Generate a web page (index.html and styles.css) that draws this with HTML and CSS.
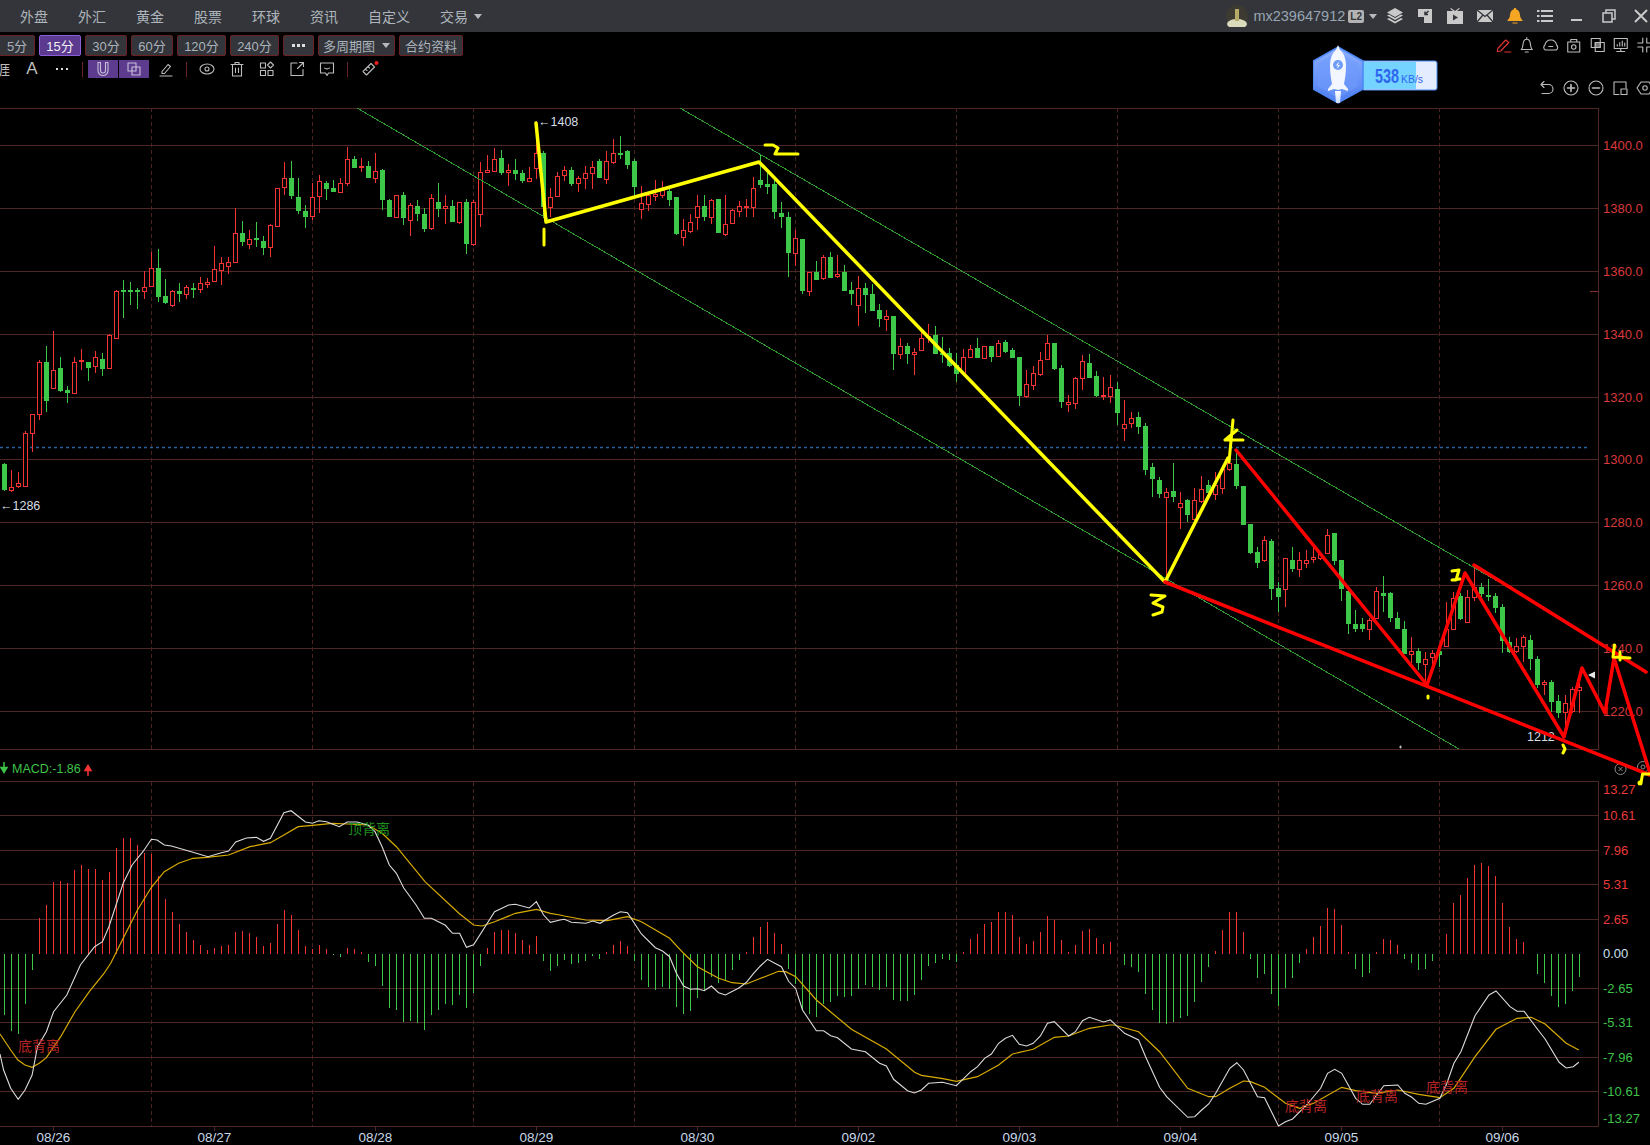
FILE: index.html
```html
<!DOCTYPE html>
<html lang="zh">
<head>
<meta charset="utf-8">
<title>MACD chart</title>
<link rel="stylesheet" href="styles.css">
</head>
<body>
<header class="topbar">
  <nav class="menu">
    <span>外盘</span><span>外汇</span><span>黄金</span><span>股票</span><span>环球</span><span>资讯</span><span>自定义</span><span class="trade">交易<i class="caret"></i></span>
  </nav>
  <div class="account">
    <svg class="avatar" viewBox="0 0 22 22"><circle cx="11" cy="11" r="11" fill="#3d3a31"/><ellipse cx="11" cy="19" rx="10" ry="5" fill="#dcdabc"/><rect x="9" y="4" width="4" height="12" fill="#b7aa66"/></svg>
    <span class="user">mx239647912</span><span class="badge">L2</span><i class="caret"></i>
  </div>
  <div class="winicons">
    <svg class="wi" viewBox="0 0 18 18"><path d="M9 1l8 4.500-8 4.500-8-4.500z"/><path d="M1 8.500l2-1 6 3.400 6-3.400 2 1-8 4.500z"/><path d="M1 12l2-1 6 3.400 6-3.400 2 1-8 4.500z"/></svg>
    <svg class="wi" viewBox="0 0 18 18"><path d="M2 2h14v14H8v-6H2z"/><path d="M12.500 4L9 7.500 M9 4.500V7.500h3" fill="none" stroke="#33353a" stroke-width="1.500"/></svg>
    <svg class="wi" viewBox="0 0 18 18"><path d="M5 1l4 3 4-3 .8.800L11 4h6v13H1V4h6L4.200 1.800z"/><path d="M7 7.500l5 3-5 3z" fill="#33353a"/></svg>
    <svg class="wi" viewBox="0 0 18 18"><path d="M1 3h16v12H1z"/><path d="M1 3l8 6.500L17 3 M1 15l6-7 M17 15l-6-7" fill="none" stroke="#33353a" stroke-width="1.300"/></svg>
    <svg class="wi bell" viewBox="0 0 18 18"><path d="M9 1c.8 0 1.200.500 1.200 1.200C13 3 13.800 5.500 14 8c.2 2.500 1 4 2.500 5v1h-15v-1C3 12 3.800 10.500 4 8c.2-2.500 1-5 3.800-5.800C7.800 1.500 8.200 1 9 1zM6.500 15.500h5V16.500h-5z"/></svg>
    <svg class="wi" viewBox="0 0 18 18"><path d="M1 3h2.500v2H1zM5 3h12v2H5zM1 8h2.500v2H1zM5 8h12v2H5zM1 13h2.500v2H1zM5 13h12v2H5z"/></svg>
    <svg class="wi gap" viewBox="0 0 18 18"><path d="M3 12h11v2H3z"/></svg>
    <svg class="wi gap" viewBox="0 0 18 18"><path d="M3 6h9v9H3z M6 6V3h9v9h-3" fill="none" stroke="#c9c9c9" stroke-width="1.500"/></svg>
    <svg class="wi gap" viewBox="0 0 18 18"><path d="M3 3l12 12M15 3L3 15" fill="none" stroke="#c9c9c9" stroke-width="2"/></svg>
  </div>
</header>

<section class="row1">
  <button class="tf w36">5分</button>
  <button class="tf w42 on">15分</button>
  <button class="tf w42">30分</button>
  <button class="tf w42">60分</button>
  <button class="tf w49">120分</button>
  <button class="tf w49">240分</button>
  <button class="tf more"><i></i><i></i><i></i></button>
  <button class="tf w77">多周期图<i class="caret small"></i></button>
  <button class="tf w64">合约资料</button>
  <div class="righttools">
    <svg class="ic red" viewBox="0 0 18 18"><path d="M3 12.500L11 4l3 2.500-8 8.500-3.500.5zM10 16h6"/></svg>
    <svg class="ic" viewBox="0 0 18 18"><path d="M3.500 13.500c1.500-1 1.500-3 1.800-5.500C5.700 5 7.500 3.200 9 3.200S12.300 5 12.700 8c.3 2.500.3 4.500 1.800 5.500zM7.500 16h3M9 1.500v1.700"/></svg>
    <svg class="ic" viewBox="0 0 18 18"><path d="M3.500 14a3 3 0 0 1-.3-5A5.500 5.500 0 0 1 9 4a5.500 5.500 0 0 1 5.800 5 3 3 0 0 1-.3 5zM7 10.500h4"/></svg>
    <svg class="ic" viewBox="0 0 18 18"><path d="M3 6h12v10H3zM6 6V3.500h6V6"/><circle cx="9" cy="11" r="2.200"/></svg>
    <svg class="ic" viewBox="0 0 18 18"><path d="M2.500 2.500h9v9h-9zM6.500 6.500h9v9h-9z"/><path d="M6.500 6.500h5v5h-5z" fill="#777"/></svg>
    <svg class="ic" viewBox="0 0 18 18"><path d="M2.500 2.500h13v10h-13zM5 15.500h8M9 12.500v3M5.500 10V8.500M8 10V6.500M10.500 10V5M13 10V7"/></svg>
    <svg class="ic" viewBox="0 0 18 18"><path d="M7 2v5H2M11 2v5h5M7 16v-5H2M11 16v-5h5"/></svg>
  </div>
</section>

<section class="row2">
  <span class="clip">涯</span>
  <span class="cell cell-a">A</span>
  <span class="cell"><svg class="ic" viewBox="0 0 18 18"><path class="dots" d="M3 9h2M8 9h2M13 9h2"/></svg></span>
  <i class="sep"></i>
  <span class="cell pur"><svg class="ic" viewBox="0 0 18 18"><path d="M4 2.500v8a5 5 0 0 0 10 0v-8h-2.500v8a2.500 2.500 0 0 1-5 0v-8z"/></svg></span>
  <span class="cell pur next"><svg class="ic" viewBox="0 0 18 18"><path d="M3 3h8v8H3zM7 7h8v8H7z"/></svg></span>
  <span class="cell pen"><svg class="ic" viewBox="0 0 18 18"><path d="M5 11.500L11 4.500l2.500 2-6 7H5zM3 16h12"/></svg></span>
  <i class="sep"></i>
  <span class="cell"><svg class="ic" viewBox="0 0 18 18"><ellipse cx="9" cy="9" rx="7" ry="5"/><circle cx="9" cy="9" r="2"/></svg></span>
  <span class="cell"><svg class="ic" viewBox="0 0 18 18"><path d="M3 4.500h12M7 4.500V2.500h4v2M4.500 4.500V16h9V4.500M7.500 8v4.500M10.500 8v4.500"/></svg></span>
  <span class="cell"><svg class="ic" viewBox="0 0 18 18"><path d="M2.500 3h5v5h-5zM2.500 10.500h5v5h-5zM10 10.500h5v5h-5zM12.500 2l3 3-3 3-3-3z"/></svg></span>
  <span class="cell"><svg class="ic" viewBox="0 0 18 18"><path d="M9 3H3v12.500h12V9.500M9.500 8.500L15.500 2.500M11.500 2.500h4v4"/></svg></span>
  <span class="cell"><svg class="ic" viewBox="0 0 18 18"><path d="M2.500 3h13v10h-5L9 15.500 7.500 13h-5zM6.500 8c1 1.200 4 1.200 5 0"/></svg></span>
  <i class="sep"></i>
  <span class="cell ruler"><svg class="ic" viewBox="0 0 18 18"><path d="M2 11.500L10 3.500l3.500 3.500L5.500 15zM4.500 9l1.500 1.500M7 6.500l1.500 1.500"/><circle class="dot" cx="15.500" cy="3" r="2"/></svg></span>
</section>

<section class="row3">
  <svg class="ic" viewBox="0 0 18 18"><path d="M4 5.500h7.500a4.500 4.500 0 0 1 0 9H5M7 2.500L4 5.500l3 3"/></svg>
  <svg class="ic" viewBox="0 0 18 18"><circle cx="9" cy="9" r="7"/><path d="M5.500 9h7M9 5.500v7" class="thick"/></svg>
  <svg class="ic" viewBox="0 0 18 18"><circle cx="9" cy="9" r="7"/><path d="M5.500 9h7" class="thick"/></svg>
  <svg class="ic" viewBox="0 0 18 18"><path d="M8 15.500H3V3h12v6"/><path d="M10 10h6v5.500h-6z"/></svg>
  <svg class="ic" viewBox="0 0 18 18"><path d="M5 3h8l4 6-4 6H5L1 9z"/><circle cx="9" cy="9" r="2.200"/></svg>
</section>

<aside class="speed">
  <svg viewBox="0 0 125 60" width="125" height="60">
    <defs>
      <linearGradient id="hexfill" x1="0" y1="0" x2="0" y2="1"><stop offset="0" stop-color="#8db0ff"/><stop offset="1" stop-color="#4f7ef2"/></linearGradient>
      <linearGradient id="flame" x1="0" y1="0" x2="0" y2="1"><stop offset="0" stop-color="#fff"/><stop offset="1" stop-color="#c9dcff"/></linearGradient>
    </defs>
    <rect x="49" y="17" width="75" height="29" rx="2" fill="#e4ecff" stroke="#4f8ef7"/>
    <path d="M50 18h53v27H50z" fill="#74d3ff"/>
    <text class="sp-num" x="62" y="39" textLength="24" lengthAdjust="spacingAndGlyphs">538</text>
    <text class="sp-unit" x="88" y="39" textLength="22" lengthAdjust="spacingAndGlyphs">KB/s</text>
    <path d="M25 3l25 14v28L25 59 0 45V17z" fill="url(#hexfill)" stroke="#4d86f5" stroke-width="1.500"/>
    <path d="M25 8l20 11.500v23L25 54 5 42.500v-23z" fill="#6f9bfb" opacity=".6"/>
    <path d="M25 1l2 5c4 3 6 9 6 16 0 7-1 13-2 18l4 5v2l-6-2-4 1-4-1-6 2v-2l4-5c-1-5-2-11-2-18 0-7 2-13 6-16z" fill="#f4f6ff"/>
    <path d="M22 47h6l-1 12h-4z" fill="url(#flame)"/>
    <circle cx="25" cy="21" r="5" fill="#6f9df6"/>
    <path d="M26 17.500l-3 4h2l-1 3.500 3-4h-2z" fill="#fff"/>
  </svg>
</aside>

<svg class="chart" viewBox="0 108 1650 1037" xmlns="http://www.w3.org/2000/svg">
  <g id="grid"></g>
  <line class="blue" x1="0" y1="447.5" x2="1588" y2="447.5"/>
  <g id="candles"></g>
  <line class="chan" x1="357" y1="108" x2="1459" y2="749"/>
  <line class="chan" x1="680" y1="108" x2="1530" y2="600"/>
  <g id="macd"></g>
  <polyline id="dea" class="dea"/>
  <polyline id="dif" class="dif"/>

  <g class="ax price">
    <text x="1603" y="145">1400.0</text><text x="1603" y="208">1380.0</text><text x="1603" y="271">1360.0</text><text x="1603" y="334">1340.0</text><text x="1603" y="397">1320.0</text><text x="1603" y="459">1300.0</text><text x="1603" y="522">1280.0</text><text x="1603" y="585">1260.0</text><text x="1603" y="648">1240.0</text><text x="1603" y="711">1220.0</text>
  </g>
  <line class="tick" x1="1590" y1="291.500" x2="1598" y2="291.500"/>
  <g class="ax price bright">
    <text x="1603" y="789">13.27</text><text x="1603" y="815">10.61</text><text x="1603" y="850">7.96</text><text x="1603" y="884">5.31</text><text x="1603" y="919">2.65</text>
  </g>
  <text class="ax zero" x="1603" y="953">0.00</text>
  <g class="ax down">
    <text x="1603" y="988">-2.65</text><text x="1603" y="1022">-5.31</text><text x="1603" y="1057">-7.96</text><text x="1603" y="1091">-10.61</text><text x="1603" y="1118">-13.27</text>
  </g>
  <g class="ax date">
    <text x="53.500" y="1137.500">08/26</text><text x="214.500" y="1137.500">08/27</text><text x="375.500" y="1137.500">08/28</text><text x="536.500" y="1137.500">08/29</text><text x="697.500" y="1137.500">08/30</text><text x="858.500" y="1137.500">09/02</text><text x="1019.500" y="1137.500">09/03</text><text x="1180.500" y="1137.500">09/04</text><text x="1341.500" y="1137.500">09/05</text><text x="1502.500" y="1137.500">09/06</text>
  </g>

  <path class="arr-g" d="M4 762v8M1 767.500l3 5 3-5z"/>
  <text class="macdt" x="12" y="769">MACD:-1.86</text>
  <path class="arr-r" d="M88 776v-8M85 770.500l3-5 3 5z"/>
  <text class="div-r" x="18" y="1046">底背离</text>
  <text class="div-g" x="348" y="829">顶背离</text>
  <text class="div-r" x="1285" y="1106">底背离</text>
  <text class="div-r" x="1356" y="1096">底背离</text>
  <text class="div-r" x="1426" y="1087">底背离</text>

  <text class="lab" x="538" y="122">←1408</text>
  <text class="lab" x="0" y="506">←1286</text>
  <text class="lab" x="1527" y="737">1212</text>
  <path class="wtri" d="M1588 675l7-3.500v7z"/>
  <path class="mini" d="M1399 747h3M1400.500 745.500v3"/>

  <g class="round">
    <circle cx="1620.500" cy="769" r="5.500"/><path d="M1618.500 767l4 4m0-4l-4 4"/>
    <circle cx="1643" cy="767" r="5.500"/><circle cx="1643" cy="767" r="2"/>
  </g>

  <polyline class="yl" points="536,123 546,222 759,162 1165,582 1228,458"/>
  <path class="ym" d="M544 229v16M765 145h8l5 3-3 6h23M1151 595l14 1-12 7 10 4-1 5-9 3M1233 420l-4 42M1237 430l-12 10h18"/>
  <path class="ym" d="M1452 571l7-1-3 10h-4l8-1M1428 696v2M1563 745l2 4-2 4"/>

  <polyline class="rl" points="1236,450 1427,685 1465,573 1564,737 1582,668 1605,713 1614,658 1650,773"/>
  <line class="rl" x1="1165" y1="582" x2="1650" y2="775"/>
  <line class="rl" x1="1474" y1="565" x2="1646" y2="672"/>
  <path class="ym" d="M1614.500 645l-1.500 12 17 1M1620 652v8M1642.600 774h8M1642.600 774l-1.500 8"/>
  <circle class="ydot" cx="1640" cy="783" r="2.500"/>
</svg>
<script src="chart.js"></script>
</body>
</html>
```
FILE: styles.css
```css
* { box-sizing: border-box; }
html, body { margin: 0; padding: 0; }
body {
  width: 1650px; height: 1145px; overflow: hidden; background: #000; position: relative;
  font-family: "Liberation Sans", "Noto Sans CJK SC", sans-serif; color: #a9b2bb;
}
.caret { display: inline-block; width: 0; height: 0; border: 4.500px solid transparent; border-top: 5px solid #b5b9be; border-bottom: 0; }
.topbar { height: 32px; background: #33353a; display: flex; align-items: center; }
.menu { display: flex; gap: 30px; padding-left: 20px; font-size: 14px; color: #aeb5bc; }
.trade { display: flex; align-items: center; gap: 6px; }
.account { margin-left: auto; display: flex; align-items: center; }
.avatar { width: 22px; height: 22px; }
.user { font-size: 14.500px; color: #97a6b3; margin-left: 5px; }
.badge { font: bold 10px "Liberation Sans", sans-serif; background: #b3b3b3; color: #33353a; border-radius: 2px; padding: 1px 2px; margin: 0 5px 0 3px; }
.winicons { display: flex; align-items: center; gap: 12px; margin-left: 9px; }
.wi { width: 18px; height: 18px; fill: #c9c9c9; }
.wi.bell { fill: #f5a623; }
.wi.gap { margin-left: 2px; }
.row1 { height: 25px; display: flex; align-items: flex-start; padding-top: 3px; gap: 4px; margin-left: -1px; }
.tf {
  height: 21px; padding: 0; border: 1px solid #6b2226; border-radius: 2px; background: #33353a; color: #a9b2bb;
  font: 13px "Liberation Sans", "Noto Sans CJK SC", sans-serif; display: flex; align-items: center; justify-content: center; white-space: nowrap;
}
.w36 { width: 36px; }
.w42 { width: 42px; }
.w49 { width: 49px; }
.w77 { width: 77px; }
.w64 { width: 64px; }
.tf.on { background: #5b3a90; border-color: #8a5fd8; color: #f0f0f0; }
.tf.more { width: 31px; gap: 2px; }
.tf.more i { width: 3px; height: 3px; background: #ddd; }
.caret.small { margin-left: 7px; border-width: 4px; border-top-width: 5px; }
.righttools { margin-left: auto; margin-right: -6px; display: flex; align-items: center; margin-top: 1px; }
.righttools .ic { width: 23.500px; height: 18px; }
.ic { width: 18px; height: 18px; fill: none; stroke: #bdbdbd; stroke-width: 1.100; stroke-linejoin: round; stroke-linecap: round; overflow: visible; }
.ic.red { stroke: #e23535; }
.ic .dots { stroke-width: 2; stroke-linecap: butt; stroke: #ddd; }
.ic .dot { fill: #f02020; stroke: none; }
.ic .thick { stroke-width: 1.600; }
.row2 { height: 22px; display: flex; align-items: center; padding-top: 2px; }
.clip { width: 10px; overflow: hidden; direction: rtl; font-size: 14px; margin-right: 7px; color: #bdbdbd; white-space: nowrap; }
.cell { width: 30px; height: 18px; display: flex; align-items: center; justify-content: center; }
.cell-a { font-size: 17px; color: #bdbdbd; }
.pur { background: #5d3b8f; }
.pur .ic { stroke: #c8c0d8; }
.pur.next { margin-left: 1px; }
.pen { margin-left: 2px; }
.ruler { margin-left: 2px; }
.sep { width: 1px; height: 15px; margin: 0 5px; background: #6b2226; }
.row3 { height: 29px; display: flex; justify-content: flex-end; margin-right: -4px; gap: 6.750px; }
.speed { position: absolute; left: 1313px; top: 44px; width: 125px; height: 60px; }
.speed svg { display: block; }
.sp-num { font: bold 21px "Liberation Sans", sans-serif; fill: #2f66f0; }
.sp-unit { font: 10.500px "Liberation Sans", sans-serif; fill: #2f66f0; }
.chart { display: block; width: 1650px; height: 1037px; font-family: "Liberation Sans", "Noto Sans CJK SC", sans-serif; }
.grid { stroke: #4d2626; stroke-width: 1; shape-rendering: crispEdges; }
.vdash { stroke: #4a2222; stroke-width: 1; stroke-dasharray: 4 3; shape-rendering: crispEdges; }
.blue { stroke: #2a5f9f; stroke-width: 1.500; stroke-dasharray: 3 3; }
.chan { stroke: #2f9a2f; stroke-width: 1; shape-rendering: crispEdges; }
.cg { fill: #3ec84a; }
.cgw { stroke: #3ec84a; shape-rendering: crispEdges; }
.cr { fill: #000; stroke: #f43333; shape-rendering: crispEdges; }
.crw { stroke: #f43333; shape-rendering: crispEdges; }
.dif { fill: none; stroke: #dcdcdc; stroke-width: 1.100; }
.dea { fill: none; stroke: #d8ac00; stroke-width: 1.200; }
.ax text, .ax.zero { font-size: 13px; dominant-baseline: central; }
.price text { fill: #d83a3c; }
.price.bright text { fill: #e83a3a; }
.zero { fill: #cfe0f0; }
.down text { fill: #3ec24a; }
.ax.date text { fill: #c8d8e8; text-anchor: middle; font-size: 13.500px; }
.tick { stroke: #8a2a2a; shape-rendering: crispEdges; }
.macdt { font-size: 12.500px; fill: #3ec24a; dominant-baseline: central; }
.arr-g { stroke: #3ec24a; fill: #3ec24a; stroke-width: 1.500; }
.arr-r { stroke: #f43333; fill: #f43333; stroke-width: 1.500; }
.div-r { font-size: 14px; fill: #b52525; dominant-baseline: central; }
.div-g { font-size: 14px; fill: #1f8f1f; dominant-baseline: central; }
.lab { font-size: 12.500px; fill: #d5dde5; dominant-baseline: central; }
.wtri { fill: #e8e8e8; }
.mini { stroke: #bbb; fill: none; }
.round { fill: none; stroke: #8a8a8a; stroke-width: 1; }
.yl { fill: none; stroke: #ffff00; stroke-width: 3.500; stroke-linejoin: round; stroke-linecap: round; }
.ym { fill: none; stroke: #ffff00; stroke-width: 3; stroke-linejoin: round; stroke-linecap: round; }
.ydot { fill: #ffff00; }
.rl { fill: none; stroke: #ff0000; stroke-width: 3.500; stroke-linejoin: round; stroke-linecap: round; }
```
FILE: chart.js
```js
// [red?, high, bodyTop, bodyBottom, low] in sampled coordinates; y = off + v / 3
var C = [
[0,1060,1062,1140,1142],[1,1080,1130,1140,1145],[1,1086,1120,1127,1133],[1,963,970,1127,1127],[1,913,913,970,1025],[1,750,757,913,930],[0,708,756,873,906],[1,663,781,833,833],[0,741,774,843,846],[0,828,840,849,878],
[1,741,757,848,848],[1,717,750,752,780],[0,757,757,774,813],[1,723,742,767,788],[0,729,747,776,797],[1,673,676,773,773],[1,541,544,683,683],[0,510,540,546,624],[0,516,540,546,585],[0,535,541,545,597],
[1,484,532,542,567],[1,426,475,527,527],[0,418,474,561,575],[0,507,558,579,581],[1,540,544,584,591],[0,520,544,552,576],[1,526,532,551,568],[0,519,534,537,563],[1,502,520,536,548],[1,505,517,521,534],
[1,408,478,512,512],[1,441,460,479,525],[1,441,455,467,491],[1,295,370,455,455],[0,333,370,396,408],[1,360,388,401,417],[0,336,385,390,410],[0,378,393,413,435],[1,343,346,410,440],[1,235,235,347,347],
[1,156,205,230,255],[0,153,205,258,267],[0,205,262,303,313],[0,285,303,321,353],[1,220,262,319,331],[1,195,214,257,309],[0,213,220,237,270],[0,210,234,245,245],[1,205,220,245,245],[1,112,148,220,228],
[0,138,148,173,175],[1,145,168,172,185],[0,153,168,203,203],[1,130,182,203,219],[0,178,181,269,300],[0,267,270,320,320],[1,255,256,320,325],[0,247,255,323,345],[1,280,286,329,377],[0,270,288,312,333],
[0,295,312,356,366],[1,252,263,353,359],[0,220,277,297,321],[1,255,289,295,341],[0,270,288,336,336],[1,277,277,335,341],[0,268,277,402,431],[1,270,277,402,407],[1,156,187,313,351],[1,136,181,187,187],
[1,114,148,182,182],[0,120,145,188,195],[1,162,181,187,227],[0,148,181,191,210],[0,180,190,213,218],[1,171,205,214,214],[1,32,130,173,208],[0,123,130,290,325],[1,235,262,290,320],[1,186,197,257,260],
[1,168,181,196,213],[0,170,180,222,228],[1,198,205,220,245],[1,168,190,203,237],[1,152,172,190,237],[0,148,153,203,205],[1,124,153,206,222],[1,87,129,155,162],[0,78,130,132,147],[0,120,123,165,177],
[0,148,153,231,258],[1,228,278,296,326],[1,245,255,281,303],[1,210,252,257,272],[1,212,240,255,264],[0,235,243,270,287],[0,261,262,372,376],[1,327,361,380,407],[1,313,337,362,368],[1,255,289,322,360],
[0,255,288,321,333],[1,268,270,320,342],[0,267,268,369,369],[1,255,343,371,377],[1,297,301,338,340],[1,272,289,304,321],[1,268,288,290,320],[1,200,235,290,321],[0,135,210,225,233],[0,190,222,231,252],
[0,210,222,305,326],[0,277,309,321,354],[0,305,321,429,500],[1,360,385,428,468],[0,387,388,543,552],[1,485,487,544,557],[0,453,487,509,510],[1,435,442,503,510],[0,427,441,504,504],[1,435,493,499,504],
[0,465,487,543,543],[0,516,540,551,585],[1,498,535,586,648],[0,518,535,555,608],[0,522,552,603,604],[0,582,601,626,650],[1,600,619,626,662],[0,618,619,731,780],[1,685,709,733,746],[0,700,709,731,762],
[1,715,725,733,795],[1,660,685,719,722],[1,643,678,680,698],[0,649,676,731,731],[0,682,730,735,760],[0,715,730,767,770],[0,728,765,791,816],[1,717,742,790,790],[1,705,716,740,745],[0,685,715,745,745],
[1,707,709,743,745],[0,708,709,740,756],[1,690,698,739,742],[0,690,697,727,728],[0,715,719,743,745],[0,740,742,857,887],[1,780,823,857,863],[1,767,790,824,840],[1,725,751,791,797],[1,676,700,748,750],
[0,700,700,776,779],
// from here y = 350 + v / 3
[0,45,54,155,175],[1,135,155,163,185],[1,80,85,160,177],[1,15,32,85,120],[0,13,38,85,85],[0,63,79,138,140],[1,80,135,137,150],[1,75,112,137,160],[0,97,118,188,225],
[1,150,222,235,272],[1,185,203,220,235],[0,185,202,230,252],[0,220,229,360,375],[0,340,352,386,440],[0,382,391,433,445],[1,415,425,440,688],[0,340,424,441,455],[1,425,458,472,537],[0,448,451,495,515],
[1,415,451,508,512],[1,377,416,453,460],[0,390,406,430,430],[1,365,405,433,450],[1,358,358,415,432],[1,300,340,358,362],[0,310,342,407,417],[0,407,409,524,525],[0,522,523,609,612],[0,590,605,639,653],
[1,557,571,631,637],[0,568,574,716,750],[0,697,714,741,785],[1,624,625,716,770],[0,590,630,657,665],[1,607,631,656,680],[1,600,629,640,653],[1,590,622,628,640],[1,605,612,625,630],[1,538,556,608,610],
[0,549,550,632,644],[0,630,631,717,752],[0,720,723,822,851],[0,780,823,836,845],[0,805,823,836,845],[1,805,810,838,870],[1,712,724,803,805],[0,678,730,738,785],[0,725,730,803,815],[0,785,804,836,836],
[0,812,838,912,913],[1,862,902,912,940],[0,895,904,938,960],[1,905,928,942,1000],[1,900,910,922,960],[0,890,904,916,952],[1,755,838,888,888],[1,725,745,837,840],[0,730,738,808,810],[1,720,740,815,820],
[1,655,712,740,752],[0,700,712,733,740],[0,688,736,740,752],[0,728,739,775,790],[0,763,771,873,910],[0,860,877,906,910],[1,865,887,903,910],[1,855,862,888,935],[0,855,870,926,960],[0,918,927,1005,1015],
[1,990,995,1003,1035],[0,990,995,1056,1085],[0,1035,1053,1088,1105],[1,1035,1060,1085,1140],[1,1010,1018,1083,1090],[1,990,1010,1020,1090]
];

// MACD bar ends; y = 750 + v / 3, zero at 610
var M = [795,843,851,762,660,504,465,396,393,400,360,346,357,357,390,366,294,264,264,285,309,312,378,447,486,522,546,570,585,600,595,588,585,546,543,549,561,588,579,522,480,495,540,588,597,585,597,614,620,594,597,606,636,648,708,774,780,816,813,819,840,795,780,762,765,735,774,729,648,594,546,540,540,549,570,585,558,633,663,648,630,642,639,633,618,627,606,585,573,588,633,690,711,720,712,717,771,792,783,744,720,681,699,693,660,630,606,561,531,516,549,582,657,702,780,792,801,762,756,738,741,738,717,705,711,720,711,750,753,753,735,690,648,639,627,630,636,606,567,552,522,516,486,486,495,561,582,573,546,498,510,570,606,585,543,537,564,582,576,610,645,651,666,732,780,819,822,816,804,798,756,696,651,603,540,486,486,546,627,684,672,732,768,714,684,639,597,561,528,474,477,525,606,657,681,669,606,567,570,585,627,639,660,657,633,610,552,459,435,384,345,339,348,378,459,531,567,576,610,672,699,738,771,762,723,681];

var DIF = [
[0,2.8,[0,912,10,960,30,1015,51,1048,70,1020,90,975,105,890,130,845,150,785,187,735,225,645,265,590,287,575,305,530,345,400,370,345,400,305,424,268,440,270,460,285,480,288,540,307,582,320,620,308,640,303,660,276,690,264,718,262,738,274,757,265,795,188,815,182,855,216,875,220,893,212,914,215,950,230,972,216,1000,216,1030,225,1050,245,1070,290,1090,345,1110,370,1130,413,1165,465,1188,505,1208,505,1247,526,1267,550,1287,550,1306,592,1326,584,1385,485,1424,465,1443,463,1482,474,1502,455,1522,495,1541,517,1568,510]],
[550,2.8,[0,517,40,508,60,517,100,520,120,513,140,520,178,495,197,485,217,488,256,552,295,593,315,603,335,620,354,670,374,708,393,718,413,716,432,722,452,708,472,728,491,735,530,713,550,697,570,670,589,648,609,628,648,650,668,694,688,716,707,780,746,842,766,842,786,857,805,863,844,897,883,905,923,940,942,948,962,988,1001,1022,1020,1029,1040,1020,1060,1000,1099,997,1138,1007,1178,965,1197,950,1217,925,1236,912,1256,880,1275,865,1295,856,1314,883,1334,888,1353,880,1373,858,1393,820,1412,815,1452,858,1471,845,1491,812,1510,802,1550,816,1568,810]],
[1100,2.851,[0,815,30,810,70,850,110,870,130,920,170,1012,190,1040,250,1102,270,1100,290,1080,310,1062,330,1030,370,955,390,938,409,960,449,1040,469,1043,509,1128,529,1115,549,1107,589,1065,629,1015,649,970,669,958,689,970,729,1045,749,1063,769,1063,809,1007,849,1005,869,1030,889,1042,909,1060,929,1063,969,1045,989,1000,1009,940,1029,905,1069,797,1109,735,1129,723,1169,770,1189,784,1209,784,1249,840,1269,867,1309,937,1329,954,1349,950,1365,937]]
];
var DEA = [
[0,2.8,[0,852,30,900,50,930,70,945,90,952,110,940,130,923,170,860,210,785,250,725,290,672,310,640,345,565,385,480,424,412,460,365,500,340,540,325,580,322,640,315,700,290,757,278,795,255,835,230,875,226,930,220,975,222,1030,225,1070,250,1110,290,1190,395,1285,490,1326,525,1350,528,1385,515,1443,490,1502,478,1541,490,1568,495]],
[550,2.8,[0,490,40,498,100,510,160,512,217,500,256,515,335,565,374,610,413,650,472,685,510,698,550,702,590,685,640,664,660,665,688,680,746,750,844,838,942,897,1021,967,1040,976,1100,986,1138,994,1197,980,1256,945,1295,912,1353,898,1412,862,1452,858,1510,835,1568,825]],
[1100,2.851,[0,830,40,825,110,845,170,905,250,1015,310,1040,330,1040,370,1015,409,993,429,995,469,1012,529,1060,569,1075,609,1060,689,1012,729,1022,789,1030,849,1020,909,1033,969,1043,1009,1015,1069,920,1129,838,1189,805,1229,802,1269,822,1329,880,1365,900]]
];

function line(cls, x1, y1, x2, y2) {
  return '<line class="' + cls + '" x1="' + x1 + '" y1="' + y1 + '" x2="' + x2 + '" y2="' + y2 + '"/>';
}
function px(v) { return Math.round(v) + 0.5; }
function cx(i) { return Math.floor(4.6 + 7 * i) + 0.5; }

var s = '', hs = [108, 145, 208, 271, 334, 397, 459, 522, 585, 648, 711, 749, 781, 815, 850, 884, 919, 988, 1022, 1057, 1091, 1126];
hs.forEach(function (y) {
  s += line('grid', 0, y + .5, 1598.5, y + .5);
});
s += line('grid', 1598.5, 108, 1598.5, 749) + line('grid', 1598.5, 781, 1598.5, 1126);
[151.5, 312.5, 473.5, 634.5, 795.5, 956.5, 1117.5, 1278.5, 1439.5].forEach(function (x) {
  s += line('vdash', x, 108, x, 749) + line('vdash', x, 782, x, 1126);
});
[53.5, 214.5, 375.5, 536.5, 697.5, 858.5, 1019.5, 1180.5, 1341.5, 1502.5].forEach(function (x) {
  s += line('grid', x, 1126, x, 1131);
});
document.getElementById('grid').innerHTML = s;

s = '';
C.forEach(function (c, i) {
  var off = i <= 150 ? 110 : 350, x = cx(i);
  var h = off + c[1] / 3, t = off + c[2] / 3, b = off + c[3] / 3, l = off + c[4] / 3;
  if (c[0]) {
    var yt = px(t), yb = Math.max(px(b), yt + 1);
    s += line('crw', x, h, x, yt) + line('crw', x, yb, x, l);
    s += '<rect class="cr" x="' + (x - 2) + '" y="' + yt + '" width="4" height="' + (yb - yt) + '"/>';
  } else {
    s += line('cgw', x, h, x, l);
    var gt = Math.round(t), gh = Math.max(Math.round(b) - gt, 2);
    s += '<rect class="cg" x="' + (x - 2.5) + '" y="' + gt + '" width="5" height="' + gh + '"/>';
  }
});
document.getElementById('candles').innerHTML = s;

s = '';
M.forEach(function (v, i) {
  if (v === 610) return;
  var y = 750 + v / 3;
  s += line(v < 610 ? 'crw' : 'cgw', cx(i), 953.5, cx(i), y);
});
document.getElementById('macd').innerHTML = s;

function toPoints(segs) {
  var out = [], last = -1;
  segs.forEach(function (g) {
    for (var k = 0; k < g[2].length; k += 2) {
      var x = g[0] + g[2][k] / g[1];
      if (x > last) { out.push(x.toFixed(1) + ',' + (750 + g[2][k + 1] / 3).toFixed(1)); last = x; }
    }
  });
  return out.join(' ');
}
document.getElementById('dif').setAttribute('points', toPoints(DIF));
document.getElementById('dea').setAttribute('points', toPoints(DEA));
```
